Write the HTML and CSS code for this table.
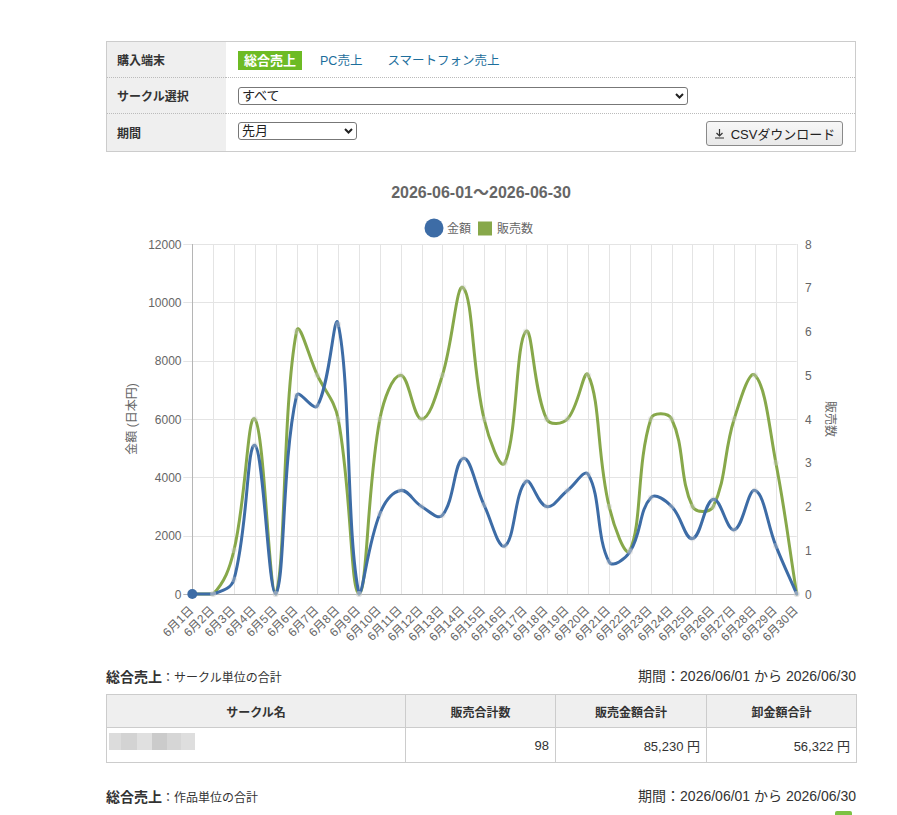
FILE: index.html
```html
<!DOCTYPE html>
<html lang="ja">
<head>
<meta charset="utf-8">
<title>売上レポート</title>
<link rel="stylesheet" href="styles.css">
</head>
<body>
<div class="page">
  <div class="filter">
    <div class="lbl">購入端末</div>
    <div class="val">
      <span class="badge">総合売上</span>
      <a class="tab tab-pc" href="#">PC売上</a>
      <a class="tab" href="#">スマートフォン売上</a>
    </div>
    <div class="lbl">サークル選択</div>
    <div class="val">
      <div class="select select-wide">
        <select><option>すべて</option></select>
        <svg class="chev" width="9" height="6" viewBox="0 0 9 6"><polyline points="1,1 4.5,4.5 8,1"/></svg>
      </div>
    </div>
    <div class="lbl last">期間</div>
    <div class="val last split">
      <div class="select select-narrow">
        <select><option>先月</option></select>
        <svg class="chev" width="9" height="6" viewBox="0 0 9 6"><polyline points="1,1 4.5,4.5 8,1"/></svg>
      </div>
      <button class="csv" type="button">
        <svg class="dl" width="11" height="11" viewBox="0 0 11 11"><path d="M5.5 1v7M2.5 5l3 3 3-3M1 10h9"/></svg>
        <span>CSVダウンロード</span>
      </button>
    </div>
  </div>

  <div id="chart" class="chart"></div>

  <div class="sec-head">
    <div class="sec-title"><strong>総合売上</strong><span>：サークル単位の合計</span></div>
    <div class="period">期間：2026/06/01 から 2026/06/30</div>
  </div>
  <table class="summary">
    <colgroup>
      <col class="c1"><col class="c2"><col class="c3"><col class="c4">
    </colgroup>
    <thead>
      <tr><th>サークル名</th><th>販売合計数</th><th>販売金額合計</th><th>卸金額合計</th></tr>
    </thead>
    <tbody>
      <tr>
        <td class="name"><div class="redact"><i class="r1"></i><i class="r2"></i><i class="r3"></i><i class="r4"></i><i class="r5"></i><i class="r6"></i></div></td>
        <td class="num">98</td>
        <td class="num">85,230 円</td>
        <td class="num">56,322 円</td>
      </tr>
    </tbody>
  </table>

  <div class="sec-head sec2">
    <div class="sec-title"><strong>総合売上</strong><span>：作品単位の合計</span></div>
    <div class="period">期間：2026/06/01 から 2026/06/30</div>
  </div>
  <div class="green-tab"></div>
</div>
<script src="chart.js"></script>
</body>
</html>
```

FILE: styles.css
```css
body {
  margin: 0;
  background: #fff;
  color: #333;
  font-family: "Liberation Sans", "Noto Sans CJK JP", sans-serif;
}

.page {
  width: 750px;
  margin-left: 106px;
  padding-top: 41px;
}

/* filter box */
.filter {
  display: grid;
  grid-template-columns: 119px 1fr;
  border: 1px solid #ccc;
  font-size: 12px;
}
.filter .lbl,
.filter .val {
  display: flex;
  align-items: center;
  height: 35px;
  border-bottom: 1px dotted #bbb;
}
.filter .lbl {
  background: #efefef;
  font-weight: bold;
  padding-left: 10px;
  color: #333;
}
.filter .val {
  padding-left: 12px;
  padding-right: 12px;
}
.filter .last {
  height: 37px;
  border-bottom: none;
}
.filter .split {
  justify-content: space-between;
}

.badge {
  display: inline-block;
  background: #6dbb24;
  color: #fff;
  font-weight: bold;
  font-size: 13px;
  line-height: 19px;
  padding: 0 6px;
  margin-top: 1px;
}
.tab {
  color: #1d6e9c;
  text-decoration: none;
  font-size: 12.5px;
  margin-left: 18px;
}
.tab-pc {
  margin-right: 7px;
}

.select {
  position: relative;
  height: 18px;
}
.select-wide { width: 450px; }
.select-narrow { width: 119px; margin-top: -4px; }
.select select {
  appearance: none;
  -webkit-appearance: none;
  box-sizing: border-box;
  width: 100%;
  height: 18px;
  border: 1px solid #777;
  border-radius: 3px;
  background: #fff;
  color: #222;
  font-family: "Liberation Sans", "Noto Sans CJK JP", sans-serif;
  font-size: 13px;
  line-height: 16px;
  padding: 0 0 0 3px;
  margin: 0;
}
.select .chev {
  position: absolute;
  right: 4px;
  top: 6px;
  fill: none;
  stroke: #222;
  stroke-width: 2;
  pointer-events: none;
}

.csv {
  display: flex;
  align-items: center;
  justify-content: center;
  gap: 6px;
  box-sizing: border-box;
  width: 137px;
  height: 25px;
  margin-top: 1px;
  padding: 0 4px;
  border: 1px solid #8a8a8a;
  border-radius: 3px;
  background: linear-gradient(#f7f7f7, #e9e9e9);
  color: #222;
  font-family: "Liberation Sans", "Noto Sans CJK JP", sans-serif;
  font-size: 13px;
}
.csv .dl {
  fill: none;
  stroke: #333;
  stroke-width: 1.2;
}

/* chart */
.chart {
  margin-top: 8px;
  height: 500px;
}
.chart svg {
  display: block;
}
.c-title {
  font-family: "Liberation Sans", "Noto Sans CJK JP", sans-serif;
  font-size: 16px;
  font-weight: bold;
  fill: #666;
}
.c-text {
  font-family: "Liberation Sans", "Noto Sans CJK JP", sans-serif;
  font-size: 12px;
  fill: #666;
}

/* sections */
.sec-head {
  display: flex;
  justify-content: space-between;
  align-items: center;
  height: 20px;
  margin-top: 6px;
  margin-bottom: 8px;
}
.sec2 {
  margin-top: 23px;
  margin-bottom: 5px;
}
.sec-title strong {
  font-size: 14px;
  font-weight: bold;
  color: #333;
}
.sec-title span {
  font-size: 12px;
  color: #333;
}
.period {
  font-size: 14px;
  color: #333;
  margin-top: -2px;
}

.summary {
  width: 750px;
  border-collapse: collapse;
  table-layout: fixed;
  font-size: 13px;
}
.summary .c1 { width: 299px; }
.summary .c2 { width: 150px; }
.summary .c3 { width: 151px; }
.summary .c4 { width: 150px; }
.summary th,
.summary td {
  border: 1px solid #ccc;
  padding: 0;
}
.summary th {
  height: 32px;
  background: #efefef;
  font-size: 12px;
  font-weight: bold;
  color: #333;
  text-align: center;
}
.summary td {
  height: 34px;
}
.summary td.num {
  text-align: right;
  padding-right: 6px;
}
.summary td.name {
  padding-left: 2px;
  vertical-align: top;
}
.redact {
  display: flex;
  margin-top: 5px;
  height: 17px;
}
.redact i {
  display: block;
  height: 17px;
}
.redact .r1 { width: 12px; background: #dcdcdc; }
.redact .r2 { width: 16px; background: #d3d3d3; }
.redact .r3 { width: 15px; background: #e0e0e0; }
.redact .r4 { width: 15px; background: #cbcbcb; }
.redact .r5 { width: 14px; background: #d6d6d6; }
.redact .r6 { width: 14px; background: #dedede; }

.green-tab {
  width: 17px;
  height: 12px;
  margin-left: auto;
  margin-right: 4px;
  background: #7dc243;
  border-radius: 2px;
}
```

FILE: chart.js
```js
(function () {
  var NS = 'http://www.w3.org/2000/svg';
  var W = 750, H = 500;
  var X0 = 86.3, X1 = 690.7, Y0 = 84, Y1 = 434;
  var blue = [0, 0, 500, 5100, 0, 6800, 6450, 9250, 0, 2750, 3550, 3000, 2700, 4650, 3050, 1650, 3850, 3000, 3550, 4100, 1100, 1450, 3300, 3000, 1900, 3250, 2200, 3550, 1650, 0];
  var green = [0, 0, 1, 4, 0, 6, 5, 4, 0, 4, 5, 4, 5, 7, 4, 3, 6, 4, 4, 5, 2, 1, 4, 4, 2, 2, 4, 5, 3, 0];
  var BLUE = '#3d6ca6', GREEN = '#87a84a';
  var n = blue.length, step = (X1 - X0) / (n - 1);

  var host = document.getElementById('chart');
  var svg = document.createElementNS(NS, 'svg');
  svg.setAttribute('width', W);
  svg.setAttribute('height', H);
  svg.setAttribute('viewBox', '0 0 ' + W + ' ' + H);
  host.appendChild(svg);

  function el(tag, attrs) {
    var e = document.createElementNS(NS, tag);
    for (var k in attrs) e.setAttribute(k, attrs[k]);
    svg.appendChild(e);
    return e;
  }
  function txt(s, attrs) {
    var e = el('text', attrs);
    e.textContent = s;
    return e;
  }
  function px(v) { return Math.round(v) + 0.5; }
  function xAt(i) { return X0 + i * step; }

  // title and legend
  txt('2026-06-01〜2026-06-30', { x: 375, y: 38, 'class': 'c-title', 'text-anchor': 'middle' });
  el('circle', { cx: 328, cy: 68, r: 9.5, fill: BLUE });
  txt('金額', { x: 341, y: 72.5, 'class': 'c-text' });
  el('rect', { x: 372, y: 61.5, width: 14, height: 14, fill: GREEN });
  txt('販売数', { x: 391, y: 72.5, 'class': 'c-text' });

  // horizontal grid + left ticks
  for (var v = 0; v <= 12000; v += 2000) {
    var y = Y1 - v / 12000 * (Y1 - Y0);
    el('line', { x1: X0 - 9, x2: X1, y1: px(y), y2: px(y), stroke: v === 0 ? '#b5b5b5' : '#e4e4e4', 'stroke-width': 1 });
    txt(String(v), { x: 75.5, y: y + 4.5, 'class': 'c-text', 'text-anchor': 'end' });
  }
  // right ticks
  for (var k = 0; k <= 8; k++) {
    var yk = Y1 - k / 8 * (Y1 - Y0);
    txt(String(k), { x: 699, y: yk + 4.5, 'class': 'c-text' });
  }
  // vertical grid + x labels
  for (var i = 0; i < n; i++) {
    var x = xAt(i);
    el('line', { x1: px(x), x2: px(x), y1: Y0, y2: Y1, stroke: i === 0 ? '#b5b5b5' : '#e4e4e4', 'stroke-width': 1 });
    txt('6月' + (i + 1) + '日', {
      'class': 'c-text', 'text-anchor': 'end', dy: '0.35em',
      transform: 'translate(' + (x - 1) + ',448) rotate(-45)'
    });
  }
  // axis titles
  txt('金額 (日本円)', { 'class': 'c-text', 'text-anchor': 'middle', dy: '0.35em', transform: 'translate(26,259) rotate(-90)' });
  txt('販売数', { 'class': 'c-text', 'text-anchor': 'middle', dy: '0.35em', transform: 'translate(724,259) rotate(90)' });

  function pointsFor(data, max) {
    var pts = [];
    for (var i = 0; i < data.length; i++) {
      pts.push({ x: xAt(i), y: Y1 - data[i] / max * (Y1 - Y0) });
    }
    return pts;
  }
  function clampY(y) { return Math.max(Y0, Math.min(Y1, y)); }
  function pathFor(pts) {
    var t = 0.4, cps = [];
    for (var i = 0; i < pts.length; i++) {
      var p = pts[i], a = pts[i - 1] || p, b = pts[i + 1] || p;
      var d01 = Math.sqrt(Math.pow(p.x - a.x, 2) + Math.pow(p.y - a.y, 2));
      var d12 = Math.sqrt(Math.pow(b.x - p.x, 2) + Math.pow(b.y - p.y, 2));
      var s01 = d01 / (d01 + d12), s12 = d12 / (d01 + d12);
      if (!isFinite(s01)) s01 = 0;
      if (!isFinite(s12)) s12 = 0;
      var fa = t * s01, fb = t * s12;
      cps.push({
        px: p.x - fa * (b.x - a.x), py: clampY(p.y - fa * (b.y - a.y)),
        nx: p.x + fb * (b.x - a.x), ny: clampY(p.y + fb * (b.y - a.y))
      });
    }
    var d = 'M' + pts[0].x.toFixed(2) + ' ' + pts[0].y.toFixed(2);
    for (var j = 1; j < pts.length; j++) {
      d += ' C' + cps[j - 1].nx.toFixed(2) + ' ' + cps[j - 1].ny.toFixed(2) + ' ' +
        cps[j].px.toFixed(2) + ' ' + cps[j].py.toFixed(2) + ' ' +
        pts[j].x.toFixed(2) + ' ' + pts[j].y.toFixed(2);
    }
    return d;
  }

  var gp = pointsFor(green, 8), bp = pointsFor(blue, 12000);
  el('path', { d: pathFor(gp), fill: 'none', stroke: GREEN, 'stroke-width': 3, 'stroke-linejoin': 'round', 'stroke-linecap': 'round' });
  el('path', { d: pathFor(bp), fill: 'none', stroke: BLUE, 'stroke-width': 3, 'stroke-linejoin': 'round', 'stroke-linecap': 'round' });

  var all = gp.concat(bp);
  for (var m = 0; m < all.length; m++) {
    el('circle', { cx: all[m].x, cy: all[m].y, r: 3, fill: 'rgba(205,205,205,0.35)' });
  }
  el('circle', { cx: bp[0].x, cy: bp[0].y, r: 5, fill: BLUE });
})();
```
